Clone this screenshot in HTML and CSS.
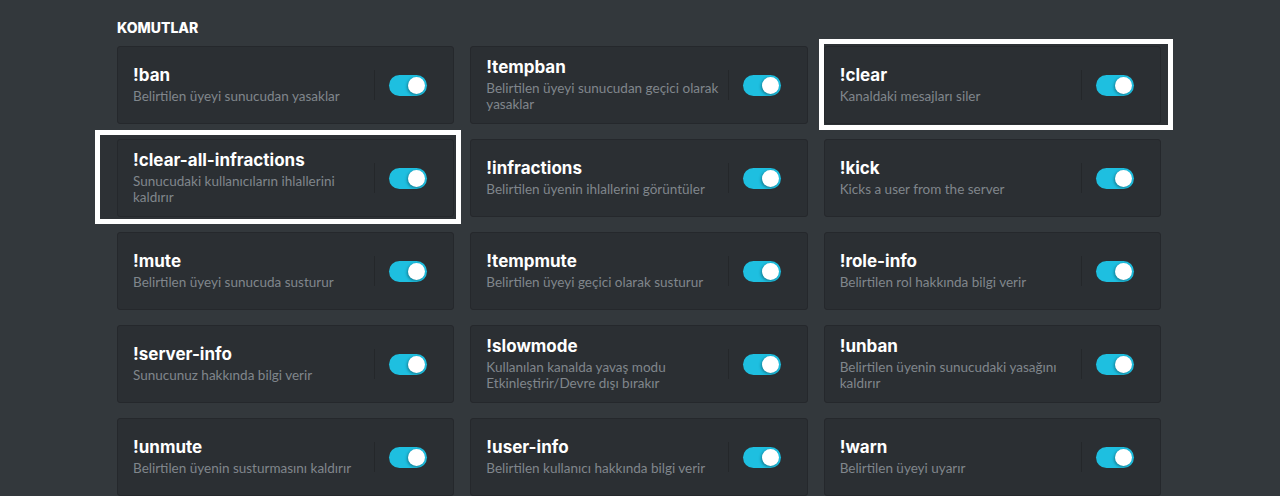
FILE: index.html
```html
<!DOCTYPE html>
<html lang="tr">
<head>
<meta charset="utf-8">
<title>Komutlar</title>
<link rel="stylesheet" href="styles.css">
</head>
<body>
<main class="page">
  <h2 class="heading">KOMUTLAR</h2>
  <div class="grid">
    <div class="card"><div class="info"><div class="title">!ban</div><div class="desc">Belirtilen üyeyi sunucudan yasaklar</div></div><div class="ctrl"><span class="toggle"><span class="knob"></span></span></div></div>
    <div class="card"><div class="info"><div class="title">!tempban</div><div class="desc">Belirtilen üyeyi sunucudan geçici olarak yasaklar</div></div><div class="ctrl"><span class="toggle"><span class="knob"></span></span></div></div>
    <div class="card"><div class="info"><div class="title">!clear</div><div class="desc">Kanaldaki mesajları siler</div></div><div class="ctrl"><span class="toggle"><span class="knob"></span></span></div></div>

    <div class="card"><div class="info"><div class="title">!clear-all-infractions</div><div class="desc">Sunucudaki kullanıcıların ihlallerini kaldırır</div></div><div class="ctrl"><span class="toggle"><span class="knob"></span></span></div></div>
    <div class="card"><div class="info"><div class="title">!infractions</div><div class="desc">Belirtilen üyenin ihlallerini görüntüler</div></div><div class="ctrl"><span class="toggle"><span class="knob"></span></span></div></div>
    <div class="card"><div class="info"><div class="title">!kick</div><div class="desc">Kicks a user from the server</div></div><div class="ctrl"><span class="toggle"><span class="knob"></span></span></div></div>

    <div class="card"><div class="info"><div class="title">!mute</div><div class="desc">Belirtilen üyeyi sunucuda susturur</div></div><div class="ctrl"><span class="toggle"><span class="knob"></span></span></div></div>
    <div class="card"><div class="info"><div class="title">!tempmute</div><div class="desc">Belirtilen üyeyi geçici olarak susturur</div></div><div class="ctrl"><span class="toggle"><span class="knob"></span></span></div></div>
    <div class="card"><div class="info"><div class="title">!role-info</div><div class="desc">Belirtilen rol hakkında bilgi verir</div></div><div class="ctrl"><span class="toggle"><span class="knob"></span></span></div></div>

    <div class="card"><div class="info"><div class="title">!server-info</div><div class="desc">Sunucunuz hakkında bilgi verir</div></div><div class="ctrl"><span class="toggle"><span class="knob"></span></span></div></div>
    <div class="card"><div class="info"><div class="title">!slowmode</div><div class="desc">Kullanılan kanalda yavaş modu Etkinleştirir/Devre dışı bırakır</div></div><div class="ctrl"><span class="toggle"><span class="knob"></span></span></div></div>
    <div class="card"><div class="info"><div class="title">!unban</div><div class="desc">Belirtilen üyenin sunucudaki yasağını kaldırır</div></div><div class="ctrl"><span class="toggle"><span class="knob"></span></span></div></div>

    <div class="card"><div class="info"><div class="title">!unmute</div><div class="desc">Belirtilen üyenin susturmasını kaldırır</div></div><div class="ctrl"><span class="toggle"><span class="knob"></span></span></div></div>
    <div class="card"><div class="info"><div class="title">!user-info</div><div class="desc">Belirtilen kullanıcı hakkında bilgi verir</div></div><div class="ctrl"><span class="toggle"><span class="knob"></span></span></div></div>
    <div class="card"><div class="info"><div class="title">!warn</div><div class="desc">Belirtilen üyeyi uyarır</div></div><div class="ctrl"><span class="toggle"><span class="knob"></span></span></div></div>
  </div>
  <div class="mark mark-clear"></div>
  <div class="mark mark-all"></div>
</main>
</body>
</html>
```

FILE: styles.css
```css
* { box-sizing: border-box; }
html, body { margin: 0; padding: 0; }
body {
  background: #33383c;
  width: 1280px;
  height: 496px;
  overflow: hidden;
  font-family: Lato, "Open Sans", sans-serif;
}
.page {
  position: relative;
  padding: 18px 0 0 117px;
}
.heading {
  margin: 0 0 8px 0;
  font-family: Inter, "Noto Sans", sans-serif;
  font-weight: 800;
  font-size: 14px;
  line-height: 20px;
  color: #ffffff;
}
.grid {
  width: 1044px;
  display: grid;
  grid-template-columns: repeat(3, 1fr);
  column-gap: 16px;
  row-gap: 15px;
}
.card {
  position: relative;
  z-index: 1;
  height: 78px;
  background: #2b2f33;
  border: 1px solid #25282c;
  border-radius: 3px;
  display: flex;
  align-items: center;
  padding: 0 26px 0 15px;
}
.info {
  flex: 1;
  min-width: 0;
  padding-right: 3px;
  padding-bottom: 1px;
}
.title {
  font-family: Inter, "Noto Sans", sans-serif;
  font-weight: 700;
  font-size: 17px;
  line-height: 21px;
  color: #ffffff;
  margin-bottom: 2px;
}
.desc {
  font-size: 13.5px;
  line-height: 16px;
  color: #80868c;
}
.ctrl {
  flex: none;
  height: 30px;
  border-left: 1px solid #24272a;
  padding-left: 14px;
  display: flex;
  align-items: center;
}
.toggle {
  position: relative;
  display: block;
  width: 38px;
  height: 21px;
  border-radius: 11px;
  background: #1ebfe0;
}
.knob {
  position: absolute;
  top: 2px;
  right: 2px;
  width: 17px;
  height: 17px;
  border-radius: 50%;
  background: #ffffff;
  box-shadow: -1px 1px 3px rgba(0, 0, 0, 0.35);
}
.mark {
  position: absolute;
  z-index: 0;
  border: 5px solid #ffffff;
  background: #2d3135;
}
.mark-clear {
  left: 819px;
  top: 39px;
  width: 354px;
  height: 91px;
}
.mark-all {
  left: 95px;
  top: 130px;
  width: 366px;
  height: 94px;
}
```
